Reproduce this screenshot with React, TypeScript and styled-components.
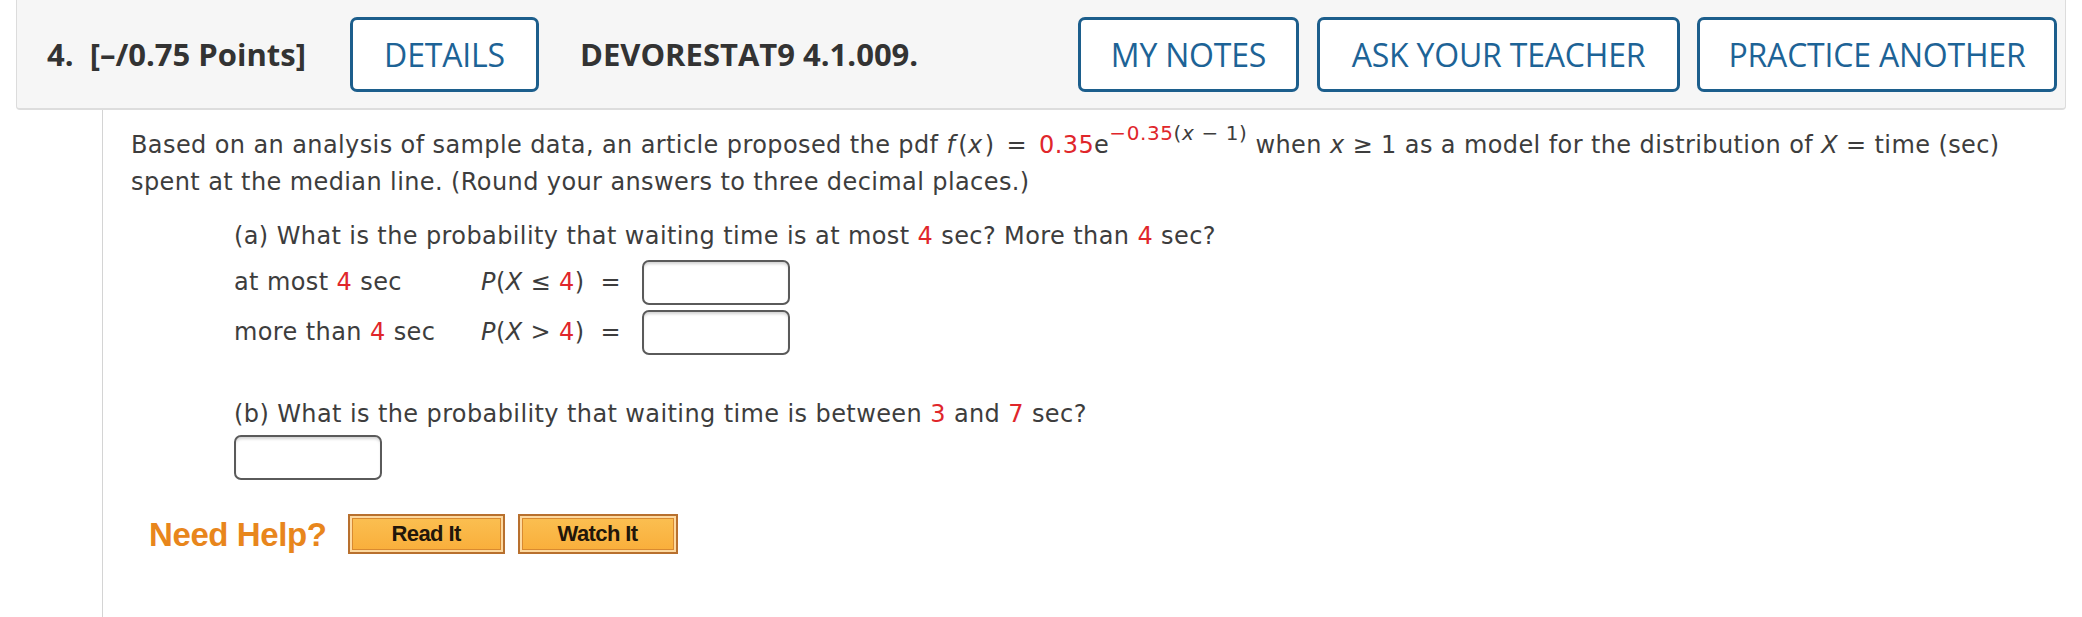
import React from "react";
import styled, { createGlobalStyle } from "styled-components";

const Global = createGlobalStyle`
  html, body { margin: 0; padding: 0; background: #ffffff; }
  body { font-family: "DejaVu Sans", Verdana, sans-serif; color: #3d3d3d; }
`;

const Page = styled.div`
  padding: 0 16px;
  height: 617px;
  display: flex;
  flex-direction: column;
  overflow: hidden;
`;

const Header = styled.div`
  height: 110px;
  flex: none;
  box-sizing: border-box;
  background: #f6f6f6;
  border: 1px solid #dcdcdc;
  border-top: none;
  border-bottom: 2px solid #dddddd;
  border-radius: 0 0 4px 4px;
  display: flex;
  align-items: center;
  padding: 0 8px 0 30px;
  font-family: "Open Sans", sans-serif;
`;

const Title = styled.span<{ $ml?: number }>`
  font-weight: 700;
  font-size: 31px;
  color: #333333;
  white-space: pre;
  margin-left: ${(p) => p.$ml ?? 0}px;
`;

const OutlineButton = styled.button<{ $w: number; $ml: number }>`
  width: ${(p) => p.$w}px;
  margin-left: ${(p) => p.$ml}px;
  height: 75px;
  box-sizing: border-box;
  border: 3px solid #1c5e8c;
  border-radius: 7px;
  background: #ffffff;
  color: #1d6396;
  font-family: "Open Sans", sans-serif;
  font-size: 32px;
  font-weight: 400;
  letter-spacing: -0.2px;
  display: flex;
  align-items: center;
  justify-content: center;
  padding: 0;
  flex: none;
`;

const Spacer = styled.div`
  flex: 1;
`;

const Body = styled.div`
  flex: 1;
  margin-left: 86px;
  border-left: 1px solid #d4d4d4;
  padding: 17px 24px 0 28px;
  font-size: 24px;
  letter-spacing: 0.4px;
  line-height: 37px;
`;

const Paragraph = styled.p`
  margin: 0;
`;

const Red = styled.span`
  color: #e0262b;
`;

const Ital = styled.i<{ $pr?: number }>`
  font-style: italic;
  padding-right: ${(p) => p.$pr ?? 0}px;
`;

const Op = styled.span`
  margin: 0 4px;
`;

const Sup = styled.sup`
  font-size: 20px;
  letter-spacing: 0.6px;
  vertical-align: 13px;
  line-height: 0;
`;

const Part = styled.div`
  margin-left: 103px;
`;

const PartQuestion = styled.div<{ $mt: number }>`
  margin-top: ${(p) => p.$mt}px;
`;

const AnswerGrid = styled.div`
  display: grid;
  grid-template-columns: 247px 161px 148px;
  grid-auto-rows: 50px;
  align-items: center;
  margin-top: 2px;
`;

const AnswerBox = styled.div<{ $mt?: number }>`
  width: 148px;
  height: 45px;
  box-sizing: border-box;
  border: 2px solid #5a5a5a;
  border-radius: 7px;
  background: #ffffff;
  box-shadow: inset 0 3px 3px -1px rgba(0, 0, 0, 0.18);
  margin-top: ${(p) => p.$mt ?? 0}px;
`;

const Expr = styled.span`
  white-space: pre;
`;

const HelpRow = styled.div`
  display: flex;
  align-items: center;
  margin-top: 34px;
  margin-left: 18px;
`;

const NeedHelp = styled.span`
  font-family: "Liberation Sans", Arial, sans-serif;
  font-weight: 700;
  font-size: 33px;
  color: #e8861c;
  letter-spacing: -0.4px;
  margin-right: 21px;
`;

const HelpButton = styled.button<{ $w: number }>`
  width: ${(p) => p.$w}px;
  height: 40px;
  margin-right: 13px;
  box-sizing: border-box;
  border: 2px solid #b8702e;
  background: linear-gradient(#fbc052, #f9ae3a);
  box-shadow: inset 0 0 0 2px #fdd9a0, inset 0 0 0 3px #d98a30;
  font-family: "Liberation Sans", Arial, sans-serif;
  font-weight: 700;
  font-size: 22px;
  letter-spacing: -0.6px;
  color: #22160a;
  padding: 0;
  display: flex;
  align-items: center;
  justify-content: center;
`;

export default function App() {
  return (
    <Page>
      <Global />
      <Header>
        <Title>4.  [–/0.75 Points]</Title>
        <OutlineButton $w={189} $ml={44}>DETAILS</OutlineButton>
        <Title $ml={41}>DEVORESTAT9 4.1.009.</Title>
        <Spacer />
        <OutlineButton $w={221} $ml={0}>MY NOTES</OutlineButton>
        <OutlineButton $w={363} $ml={18}>ASK YOUR TEACHER</OutlineButton>
        <OutlineButton $w={360} $ml={17}>PRACTICE ANOTHER</OutlineButton>
      </Header>
      <Body>
        <Paragraph>
          Based on an analysis of sample data, an article proposed the pdf{" "}
          <Ital $pr={3}>f</Ital>(<Ital $pr={2}>x</Ital>)<Op> = </Op>
          <Red>0.35</Red>e
          <Sup>
            <Red>−0.35</Red>(<Ital>x</Ital> − 1)
          </Sup>{" "}
          when <Ital>x</Ital> ≥ 1 as a model for the distribution of{" "}
          <Ital>X</Ital> = time (sec) spent at the median line. (Round your
          answers to three decimal places.)
        </Paragraph>
        <Part>
          <PartQuestion $mt={17}>
            (a) What is the probability that waiting time is at most <Red>4</Red>{" "}
            sec? More than <Red>4</Red> sec?
          </PartQuestion>
          <AnswerGrid>
            <span>
              at most <Red>4</Red> sec
            </span>
            <Expr>
              <Ital>P</Ital>(<Ital>X</Ital> ≤ <Red>4</Red>)  =
            </Expr>
            <AnswerBox />
            <span>
              more than <Red>4</Red> sec
            </span>
            <Expr>
              <Ital>P</Ital>(<Ital>X</Ital> &gt; <Red>4</Red>)  =
            </Expr>
            <AnswerBox />
          </AnswerGrid>
          <PartQuestion $mt={39}>
            (b) What is the probability that waiting time is between <Red>3</Red>{" "}
            and <Red>7</Red> sec?
          </PartQuestion>
          <AnswerBox $mt={2} />
        </Part>
        <HelpRow>
          <NeedHelp>Need Help?</NeedHelp>
          <HelpButton $w={157}>Read It</HelpButton>
          <HelpButton $w={160}>Watch It</HelpButton>
        </HelpRow>
      </Body>
    </Page>
  );
}
